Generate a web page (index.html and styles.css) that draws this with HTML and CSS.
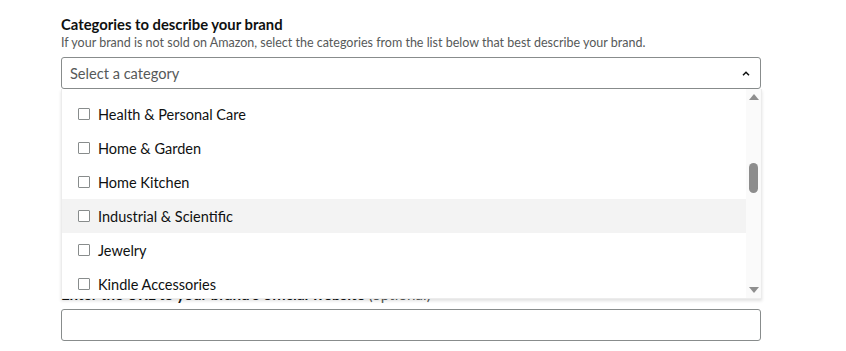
FILE: index.html
```html
<!DOCTYPE html>
<html>
<head>
<meta charset="utf-8">
<link rel="stylesheet" href="styles.css">
</head>
<body>
<div class="page">
  <section class="field">
    <h2 class="title">Categories to describe your brand</h2>
    <p class="hint">If your brand is not sold on Amazon, select the categories from the list below that best describe your brand.</p>
    <div class="select-wrap">
      <div class="select">
        <span class="placeholder">Select a category</span>
        <svg class="chev" width="8" height="5" viewBox="0 0 8 5"><polyline points="1,4.2 4,1.2 7,4.2" fill="none" stroke="#0f1111" stroke-width="1.5"/></svg>
      </div>
      <div class="dropdown">
        <ul class="list">
          <li class="item"><span class="box"></span>Health &amp; Personal Care</li>
          <li class="item"><span class="box"></span>Home &amp; Garden</li>
          <li class="item"><span class="box"></span>Home Kitchen</li>
          <li class="item hover"><span class="box"></span>Industrial &amp; Scientific</li>
          <li class="item"><span class="box"></span>Jewelry</li>
          <li class="item"><span class="box"></span>Kindle Accessories</li>
        </ul>
        <div class="track">
          <span class="arrow up"></span>
          <span class="thumb"></span>
          <span class="arrow down"></span>
        </div>
      </div>
    </div>
  </section>
  <section class="field second">
    <label class="label">Enter the URL to your brand's official website <span class="opt">(optional)</span></label>
    <div class="input"></div>
  </section>
</div>
</body>
</html>
```

FILE: styles.css
```css
* { box-sizing: border-box; }
html, body { margin: 0; padding: 0; background: #fff; }
body { font-family: "Lato", "Liberation Sans", Arial, sans-serif; color: #0f1111; }
.page { width: 700px; margin-left: 61px; padding-top: 14px; }
.title { margin: 0; font-size: 14.8px; font-weight: 700; line-height: 20px; }
.hint { margin: 0; font-size: 12.5px; line-height: 18px; color: #565959; }
.select-wrap { position: relative; margin-top: 5px; }
.select {
  height: 32px; border: 1px solid #888c8c; border-radius: 3px;
  display: flex; align-items: center; justify-content: space-between;
  padding: 0 10px 0 8px;
}
.placeholder { font-size: 14.6px; color: #565959; }
.chev { display: block; }
.dropdown {
  position: absolute; left: 0; top: 32px; width: 701px; height: 210px;
  background: #fff; border: 1px solid #ececec; border-top: none;
  box-shadow: 0 2px 3px rgba(0,0,0,0.12);
  display: flex; overflow: hidden; z-index: 2;
}
.list { list-style: none; margin: 0; padding: 8px 0 0; flex: 1; }
.item {
  height: 34px; display: flex; align-items: center; gap: 8px;
  padding-left: 16px; font-size: 14.5px; color: #0f1111;
}
.item.hover { background: #f3f3f3; }
.box { width: 12px; height: 12px; border: 1px solid #888c8c; border-radius: 1px; background: #fff; }
.track { width: 15px; background: #fafafa; position: relative; flex: none; }
.arrow { position: absolute; left: 3px; width: 0; height: 0; border-left: 5px solid transparent; border-right: 5px solid transparent; }
.arrow.up { top: 5px; border-bottom: 6px solid #8e8e8e; }
.arrow.down { bottom: 5px; border-top: 6px solid #8e8e8e; }
.thumb { position: absolute; left: 3px; top: 74px; width: 9px; height: 30px; border-radius: 5px; background: #8d8d8d; }
.second { margin-top: 195px; }
.label { display: block; font-size: 15.2px; font-weight: 700; line-height: 20px; }
.opt { font-weight: 400; color: #565959; }
.input { margin-top: 5px; height: 32px; border: 1px solid #888c8c; border-radius: 3px; }
```
